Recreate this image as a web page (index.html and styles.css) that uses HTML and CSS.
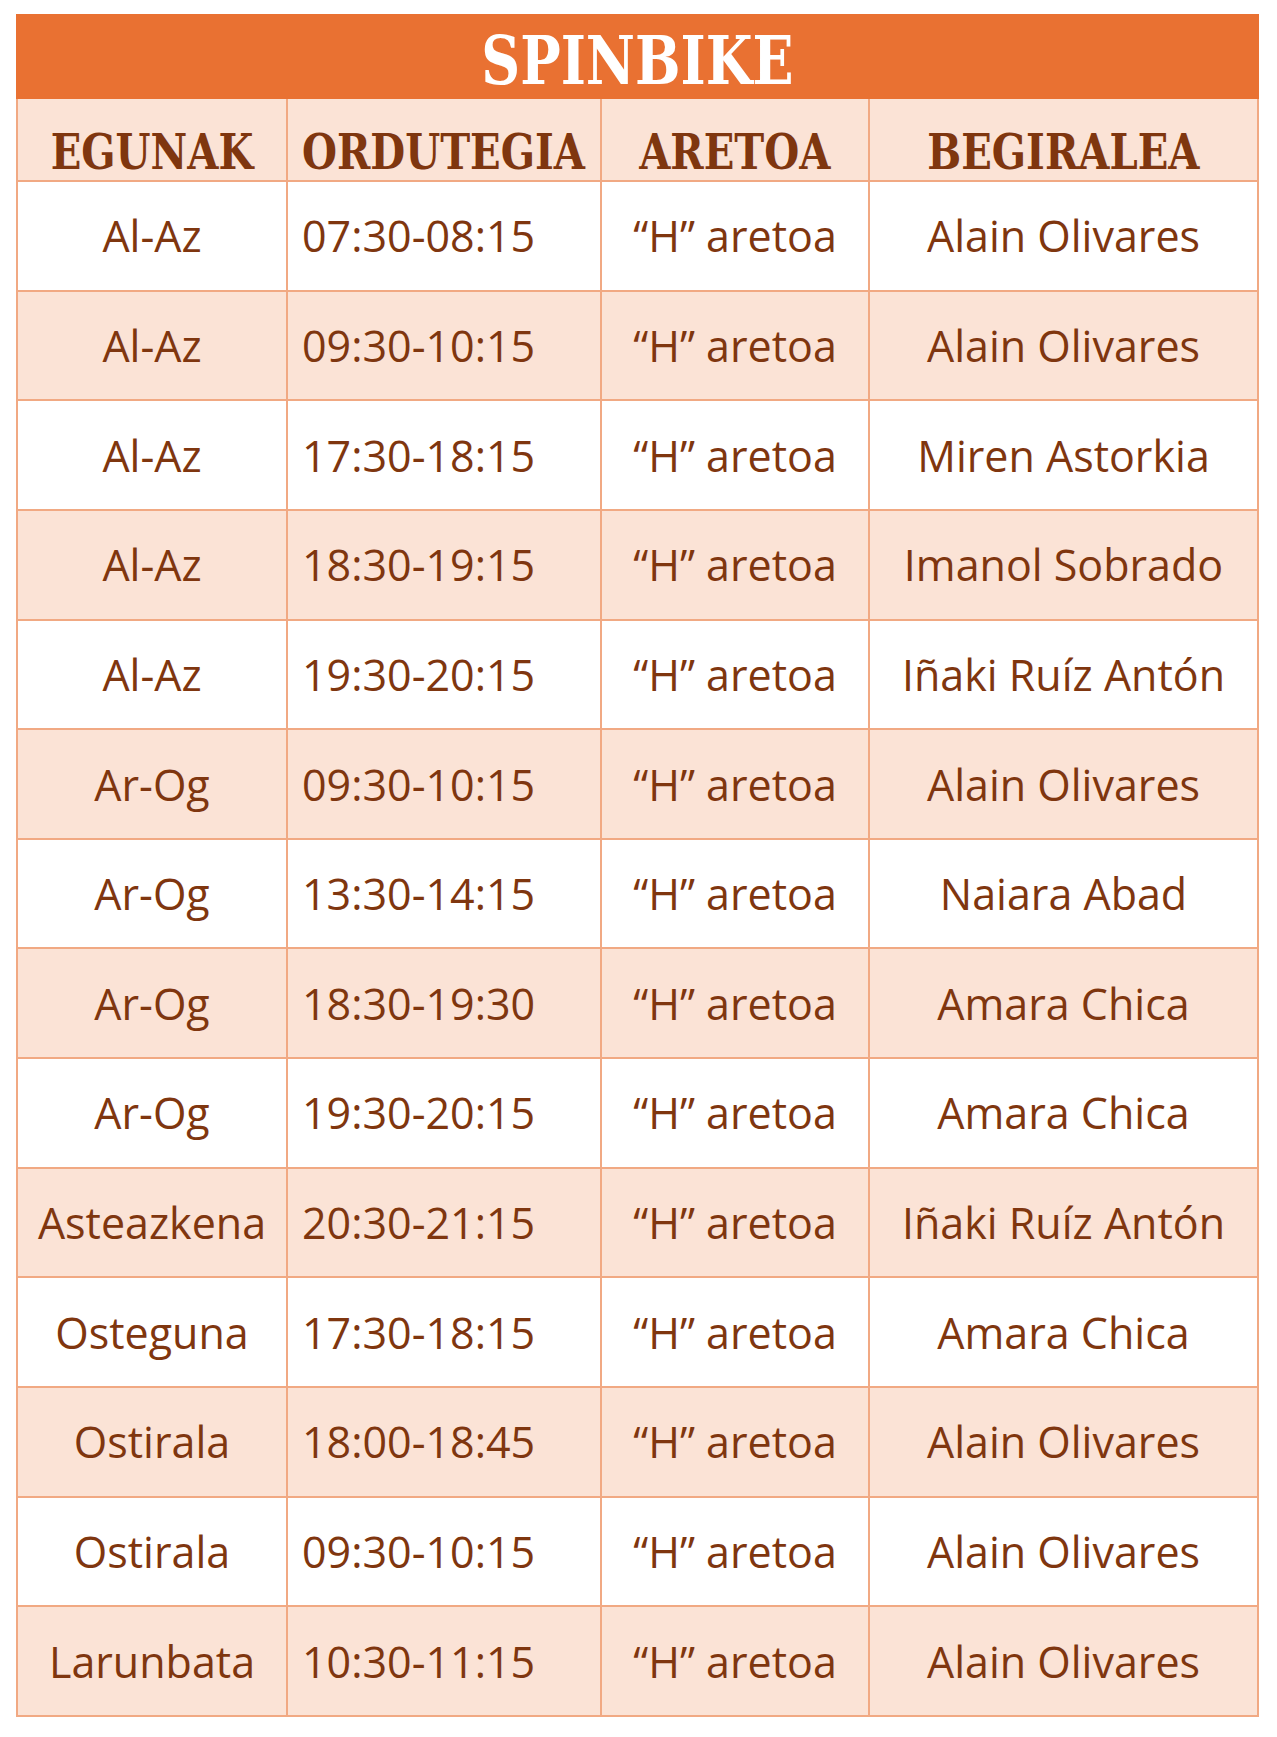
FILE: index.html
```html
<!DOCTYPE html>
<html lang="eu">
<head>
<meta charset="utf-8">
<title>Spinbike</title>
<link rel="stylesheet" href="styles.css">
</head>
<body>
<table class="schedule">
  <colgroup>
    <col class="c-day"><col class="c-time"><col class="c-room"><col class="c-coach">
  </colgroup>
  <thead>
    <tr class="title-row"><th colspan="4" class="title"><span class="squeeze">SPINBIKE</span></th></tr>
    <tr class="head-row">
      <th><span class="squeeze">EGUNAK</span></th>
      <th class="left"><span class="squeeze from-left">ORDUTEGIA</span></th>
      <th><span class="squeeze">ARETOA</span></th>
      <th><span class="squeeze">BEGIRALEA</span></th>
    </tr>
  </thead>
  <tbody>
    <tr><td>Al-Az</td><td class="left">07:30-08:15</td><td>“H” aretoa</td><td>Alain Olivares</td></tr>
    <tr><td>Al-Az</td><td class="left">09:30-10:15</td><td>“H” aretoa</td><td>Alain Olivares</td></tr>
    <tr><td>Al-Az</td><td class="left">17:30-18:15</td><td>“H” aretoa</td><td>Miren Astorkia</td></tr>
    <tr><td>Al-Az</td><td class="left">18:30-19:15</td><td>“H” aretoa</td><td>Imanol Sobrado</td></tr>
    <tr><td>Al-Az</td><td class="left">19:30-20:15</td><td>“H” aretoa</td><td>Iñaki Ruíz Antón</td></tr>
    <tr><td>Ar-Og</td><td class="left">09:30-10:15</td><td>“H” aretoa</td><td>Alain Olivares</td></tr>
    <tr><td>Ar-Og</td><td class="left">13:30-14:15</td><td>“H” aretoa</td><td>Naiara Abad</td></tr>
    <tr><td>Ar-Og</td><td class="left">18:30-19:30</td><td>“H” aretoa</td><td>Amara Chica</td></tr>
    <tr><td>Ar-Og</td><td class="left">19:30-20:15</td><td>“H” aretoa</td><td>Amara Chica</td></tr>
    <tr><td>Asteazkena</td><td class="left">20:30-21:15</td><td>“H” aretoa</td><td>Iñaki Ruíz Antón</td></tr>
    <tr><td>Osteguna</td><td class="left">17:30-18:15</td><td>“H” aretoa</td><td>Amara Chica</td></tr>
    <tr><td>Ostirala</td><td class="left">18:00-18:45</td><td>“H” aretoa</td><td>Alain Olivares</td></tr>
    <tr><td>Ostirala</td><td class="left">09:30-10:15</td><td>“H” aretoa</td><td>Alain Olivares</td></tr>
    <tr><td>Larunbata</td><td class="left">10:30-11:15</td><td>“H” aretoa</td><td>Alain Olivares</td></tr>
  </tbody>
</table>
</body>
</html>
```

FILE: styles.css
```css
html, body {
  margin: 0;
  padding: 0;
  background: #ffffff;
}

body {
  padding: 14px 0 0 16px;
}

.schedule {
  width: 1241px;
  border-collapse: collapse;
  table-layout: fixed;
  border: 2px solid #F1A983;
  color: #7F360F;
}

.c-day { width: 270px; }
.c-time { width: 314px; }
.c-room { width: 268px; }
.c-coach { width: 389px; }

.schedule th,
.schedule td {
  border: 2px solid #F1A983;
  text-align: center;
  vertical-align: middle;
  padding: 0;
  white-space: nowrap;
}

.schedule .left {
  text-align: left;
  padding-left: 14px;
}

.squeeze {
  display: inline-block;
  transform-origin: center center;
}

.squeeze.from-left {
  transform-origin: left center;
}

.title-row th.title {
  background: #E97132;
  border-color: #E97132;
  color: #ffffff;
  height: 83px;
  font-family: "DejaVu Serif Condensed", "DejaVu Serif", serif;
  font-weight: 700;
  font-size: 68px;
  line-height: 1;
  padding-top: 6px;
  box-sizing: border-box;
}

.title-row .squeeze {
  transform: scaleX(0.88);
}

.head-row th {
  background: #FBE3D6;
  height: 83px;
  font-family: "DejaVu Serif Condensed", "DejaVu Serif", serif;
  font-weight: 700;
  font-size: 48px;
  line-height: 1;
  padding-top: 24px;
  box-sizing: border-box;
}

.head-row .squeeze {
  transform: scaleX(0.93);
}

.head-row th.left {
  padding-left: 14px;
}

.schedule tbody tr {
  height: 109.65px;
}

.schedule tbody td {
  font-family: "Open Sans", "Liberation Sans", sans-serif;
  font-size: 43px;
  line-height: 1;
  background: #ffffff;
}

.schedule tbody tr:nth-child(even) td {
  background: #FBE3D6;
}
```
